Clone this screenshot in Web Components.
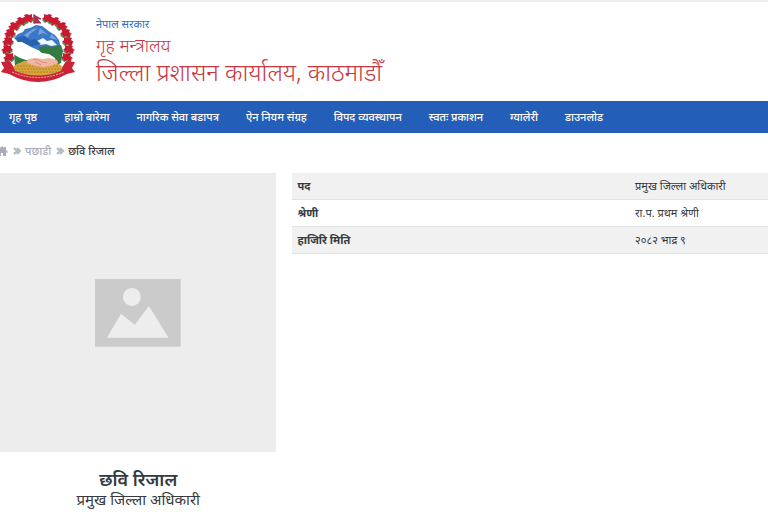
<!DOCTYPE html>
<html lang="ne">
<head>
<meta charset="utf-8">
<meta name="viewport" content="width=device-width, initial-scale=1">
<title>जिल्ला प्रशासन कार्यालय, काठमाडौँ</title>
<style>
  body {
    margin: 0;
    background: #fff;
    color: #343a40;
    font-family: "Noto Sans", "Noto Sans Devanagari", "Liberation Sans", sans-serif;
    font-size: 11px;
    line-height: 20px;
    font-feature-settings: "locl" 0;
    overflow-x: hidden;
  }
</style>
</head>
<body>
<office-page></office-page>

<script>
class NepalEmblem extends HTMLElement {
  constructor() {
    super();
    const shadow = this.attachShadow({ mode: 'open' });

    // rhododendron wreath, left side; the right side is mirrored
    const flowers = [[28, 4], [21, 7], [14, 12], [10, 19], [8, 27], [7, 35], [9, 43]]
    const flower = ([x, y]) => `
      <path transform="translate(${x} ${y})" fill="#4c8f5b" d="M-5 3l3-4 3 5-2 2zM2-1l4 3-3 3z"/>
      <path transform="translate(${x} ${y})" fill="#cb1a30" d="M-1-4l2 1 3-1 0 3 2 2-3 1 0 3-3-2-4 2 0-3-2-1 3-2-1-2z"/>`
    const wreath = flowers.map(flower).join('')

    shadow.innerHTML = `
      <style>
        :host { display: block; flex: none; width: 76px; }
        svg { display: block; width: 100%; }
      </style>
      <svg viewBox="0 0 76 68" role="img" aria-label="नेपाल">
        <path d="M14 24l4-4 5-2 2-3 5-1 6-3 6 1 8 6 5 3 4 5 2 9-8 4-18-3-17-8z" fill="#3b78c9"/>
        <path d="M24 21l9-6 5-1-8 6-3 5zM40 14l8 7-5-2-5 2zM51 20l7 6-8-2z" fill="#75a4dd"/>
        <path d="M37 27l6-3 4 3 5-1 5 5-6 1-5-2-6 1z" fill="#f3f7fb"/>
        <path d="M16 24l9-2 5 4 5-1 6 5-9 2-14-4z" fill="#2a61ae"/>
        <path d="M39 33l7-1 7 1 8-2 2 6-2 12-8 4-12-8z" fill="#347b42"/>
        <path d="M14 37l9 3 12 4-5 7-15 2z" fill="#347b42"/>
        <path d="M16 33l1-5 5 0 9 5 7 3 4 3 7 1 6 4 1 7-3 1-7-2-8-1-9-2-9-3-7-4 1-4z" fill="#fff"/>
        <path d="M13 53l4-3 7-3 14-1 14 1 7 3 4 3-1 8q-12 5-24 5t-24-5z" fill="#d6a53d"/>
        <path d="M17 52h42M15 55h46M16 58h44" stroke="#b87e20" stroke-width="1" stroke-dasharray="2 1"/>
        <path d="M28 45l7-1 8 1 6-1 8 2 1 3-7 3-8 1-8-1-8-3z" fill="#f0b5a5"/>
        <path d="M33 45l5 1 4 2 5 1M35 48l6 3" fill="none" stroke="#d98e7c"/>
        ${wreath}
        <g transform="translate(76 0) scale(-1 1)">${wreath}</g>
        <path d="M34 0v10M34 1l7 4h-4l4 4h-7z" fill="#d51e3a" stroke="#8c3f5f" stroke-width="1"/>
        <path d="M1 48l9-1 3 5 2 5q23 9 46 0l2-5 3-5 9 1-3 6 3 4-8 2q-29 16-58 0l-8-2 3-4z" fill="#cc2237"/>
        <path d="M12 58q26 11 52 0" fill="none" stroke="#e9bdaa" stroke-width="1" stroke-dasharray="2 1"/>
      </svg>
    `;
  }
}

class SiteHeader extends HTMLElement {
  constructor() {
    super();
    const shadow = this.attachShadow({ mode: 'open' });
    shadow.innerHTML = `
      <style>
        :host {
          display: flex;
          gap: 20px;
          align-items: flex-start;
          border-top: 2px solid #eee;
          padding: 12px 0 13px;
          color: #c8373f;
        }
        .names { display: flex; flex-direction: column; }
        ::slotted(p), ::slotted(h1), ::slotted(h2) { margin: 0; font-weight: 300; }
        ::slotted(p) { color: #2d70c4; font-weight: 400; }
        ::slotted(h2) { font-size: 18px; line-height: 22px; }
        ::slotted(h1) { font-size: 24px; line-height: 32px; }
      </style>
      <nepal-emblem></nepal-emblem>
      <div class="names"><slot></slot></div>
    `;
  }
}

class MainNav extends HTMLElement {
  constructor() {
    super();
    const shadow = this.attachShadow({ mode: 'open' });
    shadow.innerHTML = `
      <style>
        :host { display: block; background: #235eb9; color: #fff; }
        nav { display: flex; gap: 27px; padding: 6px 9px; white-space: nowrap; font-weight: 500; }
      </style>
      <nav><slot></slot></nav>
    `;
  }
}

class BreadCrumb extends HTMLElement {
  constructor() {
    super();
    const shadow = this.attachShadow({ mode: 'open' });
    const arrows = `<svg class="sep" viewBox="0 0 8 8" aria-hidden="true"><path d="M1 1l3 3-3 3M4 1l3 3-3 3"/></svg>`
    shadow.innerHTML = `
      <style>
        :host { display: block; padding: 8px 0 12px; color: #a9adb8; font-weight: 500; }
        nav { display: flex; align-items: center; gap: 4px; margin-left: -4px; }
        a { color: inherit; text-decoration: none; }
        .home { display: block; width: 12px; height: 10px; fill: #a9adb8; }
        .sep { width: 8px; height: 8px; margin-left: 1px; fill: none; stroke: #b4b7c0; stroke-width: 2; }
        ::slotted(span) { color: #343a40; }
      </style>
      <nav aria-label="breadcrumb">
        <a href="#" aria-label="गृह पृष्ठ">
          <svg class="home" viewBox="0 0 12 10"><path d="M6 0l2 2V1h2v3l2 2-1 1-1-1v4H7V7H5v3H2V6L1 7 0 6z"/></svg>
        </a>
        ${arrows}
        <slot name="parent"></slot>
        ${arrows}
        <slot></slot>
      </nav>
    `;
  }
}

class ProfileCard extends HTMLElement {
  constructor() {
    super();
    const shadow = this.attachShadow({ mode: 'open' });
    shadow.innerHTML = `
      <style>
        :host { display: block; text-align: center; }
        .photo {
          display: flex;
          align-items: center;
          justify-content: center;
          aspect-ratio: 276 / 279;
          background: #ededed;
        }
        svg { display: block; width: 31%; }
        .text { padding: 16px 0; }
        ::slotted(h3), ::slotted(p) { margin: 0; }
        ::slotted(h3) { font-size: 18px; line-height: 22px; font-weight: 600; }
        ::slotted(p) { font-size: 15px; line-height: 18px; }
      </style>
      <div class="photo">
        <svg viewBox="0 0 86 68" aria-hidden="true">
          <path d="M0 0h86v68H0z" fill="#cbcbcb"/>
          <circle cx="37" cy="18" r="9" fill="#ededed"/>
          <path d="M12 59l14-24 14 11 14-19 20 32z" fill="#ededed"/>
        </svg>
      </div>
      <div class="text"><slot></slot></div>
    `;
  }
}

class DetailTable extends HTMLElement {
  constructor() {
    super();
    const shadow = this.attachShadow({ mode: 'open' });
    const rows = [
      ['पद', 'प्रमुख जिल्ला अधिकारी'],
      ['श्रेणी', 'रा.प. प्रथम श्रेणी'],
      ['हाजिरि मिति', '२०८२ भाद्र ९'],
    ]
    shadow.innerHTML = `
      <style>
        :host { display: block; }
        table { width: 100%; border-collapse: collapse; table-layout: fixed; }
        th, td { padding: 3px 5px; text-align: left; border-bottom: 1px solid #dfe1e3; }
        th { width: 71%; font-weight: 700; box-sizing: border-box; }
        tr:nth-child(odd) { background: #f1f1f1; }
      </style>
      <table>
        <tbody>
          ${rows.map(([name, value]) => `<tr><th scope="row">${name}</th><td>${value}</td></tr>`).join('')}
        </tbody>
      </table>
    `;
  }
}

class OfficePage extends HTMLElement {
  constructor() {
    super();
    const shadow = this.attachShadow({ mode: 'open' });
    shadow.innerHTML = `
      <style>
        :host { display: block; }
        a { color: inherit; text-decoration: none; }
        main { display: grid; grid-template-columns: 36% 1fr; gap: 16px; align-items: start; }
      </style>
      <site-header>
        <p>नेपाल सरकार</p>
        <h2>गृह मन्त्रालय</h2>
        <h1>जिल्ला प्रशासन कार्यालय, काठमाडौँ</h1>
      </site-header>
      <main-nav>
        <a href="#">गृह पृष्ठ</a>
        <a href="#">हाम्रो बारेमा</a>
        <a href="#">नागरिक सेवा बडापत्र</a>
        <a href="#">ऐन नियम संग्रह</a>
        <a href="#">विपद व्यवस्थापन</a>
        <a href="#">स्वतः प्रकाशन</a>
        <a href="#">ग्यालेरी</a>
        <a href="#">डाउनलोड</a>
      </main-nav>
      <bread-crumb>
        <a slot="parent" href="#">पछाडी</a>
        <span>छवि रिजाल</span>
      </bread-crumb>
      <main>
        <profile-card>
          <h3>छवि रिजाल</h3>
          <p>प्रमुख जिल्ला अधिकारी</p>
        </profile-card>
        <detail-table></detail-table>
      </main>
    `;
  }
}

customElements.define('nepal-emblem', NepalEmblem);
customElements.define('site-header', SiteHeader);
customElements.define('main-nav', MainNav);
customElements.define('bread-crumb', BreadCrumb);
customElements.define('profile-card', ProfileCard);
customElements.define('detail-table', DetailTable);
customElements.define('office-page', OfficePage);
</script>
</body>
</html>
